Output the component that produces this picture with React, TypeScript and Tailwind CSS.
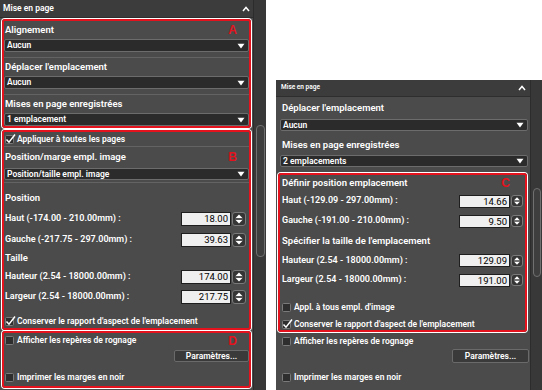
import React from "react";

const RED = "border-2 border-[#e3121c] rounded-[3px] shadow-[0_0_0_1px_#ffffff]";

function Caret() {
  return (
    <svg width="8" height="6" viewBox="0 0 8 6">
      <path d="M1 5 L4 1.5 L7 5" stroke="#fff" strokeWidth="1.5" fill="none" />
    </svg>
  );
}

function Arrow() {
  return (
    <svg width="8" height="6" viewBox="0 0 8 6">
      <path d="M0.5 0.8 H7.5 L4 5.5 Z" fill="#fff" />
    </svg>
  );
}

function Dropdown({ text, className = "" }: { text: string; className?: string }) {
  return (
    <div
      className={
        "flex items-center justify-between rounded-[2px] border border-[#6c6c6c] bg-[#2b2b2b] pl-[2px] pr-[3px] " +
        className
      }
    >
      <span className="text-[8.5px] font-semibold leading-none text-white">{text}</span>
      <Arrow />
    </div>
  );
}

function Check({ checked }: { checked?: boolean }) {
  return (
    <div className="relative h-[9px] w-[9px] shrink-0 rounded-[1.5px] border border-[#7a7a7a] bg-[#2e2e2e]">
      {checked && (
        <svg className="absolute -left-[1px] -top-[3px]" width="11" height="11" viewBox="0 0 11 11">
          <path d="M1.5 6.5 L4 9.2 L10 1.5" stroke="#fff" strokeWidth="1.5" fill="none" />
        </svg>
      )}
    </div>
  );
}

function Spinner({ className }: { className: string }) {
  return (
    <div className={"flex items-center justify-center rounded-[3px] border border-[#7a7a7a] bg-[#353535] " + className}>
      <svg viewBox="0 0 10 12" className="h-full w-full">
        <path d="M5 1.6 L8.4 5 H1.6 Z" fill="#fff" />
        <path d="M1.6 7 H8.4 L5 10.4 Z" fill="#fff" />
        <line x1="1" y1="6" x2="9" y2="6" stroke="#9a9a9a" strokeWidth="0.6" />
      </svg>
    </div>
  );
}

function NumField({ value, big }: { value: string; big?: boolean }) {
  return (
    <div className="flex items-center gap-[1px]">
      <div
        className={
          big
            ? "h-[14px] w-[50px] border border-[#1e1e1e] bg-[#efefef] pr-[2px] text-right text-[9.5px] leading-[12px] text-black"
            : "h-[13px] w-[51px] border border-[#1e1e1e] bg-[#efefef] pr-[2px] text-right text-[9.5px] leading-[11px] text-black"
        }
      >
        {value}
      </div>
      <Spinner className={big ? "h-[14px] w-[14px]" : "h-[12px] w-[12px]"} />
    </div>
  );
}

function FieldRow({ label, value, className, big }: { label: string; value: string; className: string; big?: boolean }) {
  return (
    <div className={"flex items-center justify-between " + className}>
      <span className="text-[9px] font-semibold text-white">{label}</span>
      <NumField value={value} big={big} />
    </div>
  );
}

function CheckRow({ label, checked, className }: { label: string; checked?: boolean; className: string }) {
  return (
    <div className={"flex items-center gap-[3px] " + className}>
      <Check checked={checked} />
      <span className="text-[8.5px] font-semibold leading-none text-white">{label}</span>
    </div>
  );
}

function Letter({ l }: { l: string }) {
  return <span className="font-['Liberation_Sans',sans-serif] text-[12px] font-bold leading-none text-[#e3121c]">{l}</span>;
}

function Label({ children }: { children: React.ReactNode }) {
  return <span className="text-[9.5px] font-semibold text-white">{children}</span>;
}

function LeftPanel() {
  return (
    <div className="flex h-[390px] w-[266px] shrink-0 bg-[#4b4b4b]">
      <div className="flex w-[253px] flex-col">
        <div className="flex h-[18px] shrink-0 items-center justify-between border-b border-[#2e2e2e] bg-[#3c3c3c] pl-[3px] pr-[3px]">
          <span className="text-[8.5px] font-semibold text-white">Mise en page</span>
          <Caret />
        </div>
        <div className="flex flex-col px-[2px] pt-[1px]">
          {/* A */}
          <div className={"flex h-[109px] flex-col " + RED}>
            <div className="flex flex-col border-b border-[#636363] pb-[5px]">
              <div className="flex h-[18px] items-center justify-between pl-[1px] pr-[12px]">
                <Label>Alignement</Label>
                <Letter l="A" />
              </div>
              <Dropdown text="Aucun" className="h-[13px]" />
            </div>
            <div className="flex flex-col border-b border-[#636363] pb-[5px]">
              <div className="flex h-[18px] items-center pl-[1px]">
                <Label>Déplacer l'emplacement</Label>
              </div>
              <Dropdown text="Aucun" className="h-[13px]" />
            </div>
            <div className="flex flex-col">
              <div className="flex h-[18px] items-center pl-[1px]">
                <Label>Mises en page enregistrées</Label>
              </div>
              <Dropdown text="1 emplacement" className="h-[13px]" />
            </div>
          </div>

          {/* B */}
          <div className={"mt-[2px] flex h-[200px] flex-col " + RED}>
            <CheckRow label="Appliquer à toutes les pages" checked className="h-[14px] pl-[1px]" />
            <div className="flex flex-col border-t border-[#636363] pb-[2px]">
              <div className="flex h-[20px] items-center justify-between pl-[1px] pr-[12px]">
                <Label>Position/marge empl. image</Label>
                <Letter l="B" />
              </div>
              <Dropdown text="Position/taille empl. image" className="mt-[1px] h-[12px]" />
            </div>
            <div className="flex flex-col border-t border-[#636363] pt-[6px] pl-[1px] pr-[3px]">
              <div className="flex h-[19px] items-center">
                <Label>Position</Label>
              </div>
              <FieldRow label="Haut (-174.00 - 210.00mm) :" value="18.00" className="h-[21px]" big />
              <FieldRow label="Gauche (-217.75 - 297.00mm) :" value="39.63" className="h-[21px]" big />
              <div className="flex h-[16px] items-center">
                <Label>Taille</Label>
              </div>
              <FieldRow label="Hauteur (2.54 - 18000.00mm) :" value="174.00" className="h-[21px]" big />
              <FieldRow label="Largeur (2.54 - 18000.00mm) :" value="217.75" className="h-[20px]" big />
              <CheckRow label="Conserver le rapport d'aspect de l'emplacement" checked className="mt-[8px] h-[13px]" />
            </div>
          </div>

          {/* D */}
          <div className={"mt-[1px] flex h-[57px] flex-col " + RED}>
            <div className="flex h-[15px] items-center justify-between pr-[12px]">
              <CheckRow label="Afficher les repères de rognage" className="h-[15px] pl-[1px]" />
              <Letter l="D" />
            </div>
            <div className="mt-[2px] flex justify-end">
              <div className="flex h-[12px] w-[75px] items-center justify-center rounded-[2px] border border-[#6a6a6a] bg-[#3a3a3a] text-[8.5px] font-semibold leading-none text-white">
                Paramètres...
              </div>
            </div>
            <CheckRow label="Imprimer les marges en noir" className="mt-[8px] h-[14px] pl-[1px]" />
          </div>
        </div>
      </div>
      <div className="flex w-[13px] flex-col border-l border-[#2c2c2c] bg-[#383838] pt-[125px]">
        <div className="mx-auto h-[132px] w-[9px] rounded-[4px] border border-[#707070] bg-[#3e3e3e]" />
      </div>
    </div>
  );
}

function RightPanel() {
  return (
    <div className="mt-[80px] flex h-[310px] w-[266px] shrink-0 bg-[#4b4b4b]">
      <div className="flex w-[254px] flex-col">
        <div className="flex h-[17px] shrink-0 items-center justify-between border-b border-[#2e2e2e] bg-[#3c3c3c] pl-[5px] pr-[4px]">
          <span className="text-[6.5px] font-semibold text-white">Mise en page</span>
          <Caret />
        </div>
        <div className="flex flex-col pt-[1px]">
          <div className="flex h-[21px] items-center pl-[6px]">
            <Label>Déplacer l'emplacement</Label>
          </div>
          <Dropdown text="Aucun" className="ml-[4px] mr-[2px] h-[12px]" />
          <div className="flex h-[24px] items-center pl-[6px] pt-[4px]">
            <Label>Mises en page enregistrées</Label>
          </div>
          <Dropdown text="2 emplacements" className="ml-[4px] mr-[2px] h-[12px]" />

          {/* C */}
          <div className={"ml-[2px] mr-[3px] mt-[6px] flex h-[159px] flex-col pl-[2px] pr-[2px] " + RED}>
            <div className="flex h-[16px] items-center justify-between pr-[13px]">
              <Label>Définir position emplacement</Label>
              <Letter l="C" />
            </div>
            <FieldRow label="Haut (-129.09 - 297.00mm) :" value="14.66" className="h-[20px]" />
            <FieldRow label="Gauche (-191.00 - 210.00mm) :" value="9.50" className="h-[20px]" />
            <div className="flex h-[20px] items-center">
              <Label>Spécifier la taille de l'emplacement</Label>
            </div>
            <FieldRow label="Hauteur (2.54 - 18000.00mm) :" value="129.09" className="h-[19px]" />
            <FieldRow label="Largeur (2.54 - 18000.00mm) :" value="191.00" className="h-[20px]" />
            <CheckRow label="Appl. à tous empl. d'image" className="mt-[10px] h-[14px]" />
            <CheckRow label="Conserver le rapport d'aspect de l'emplacement" checked className="mt-[4px] h-[12px]" />
          </div>

          <CheckRow label="Afficher les repères de rognage" className="mt-[1px] h-[16px] pl-[6px]" />
          <div className="flex justify-end pr-[1px]">
            <div className="flex h-[14px] w-[77px] items-center justify-center rounded-[2px] border border-[#6a6a6a] bg-[#3a3a3a] text-[8.5px] font-semibold leading-none text-white">
              Paramètres...
            </div>
          </div>
          <CheckRow label="Imprimer les marges en noir" className="mt-[7px] h-[15px] pl-[6px]" />
        </div>
      </div>
      <div className="flex w-[12px] flex-col border-l border-[#2c2c2c] bg-[#383838] pt-[108px]">
        <div className="ml-[2px] h-[89px] w-[8px] rounded-[4px] border border-[#707070] bg-[#3e3e3e]" />
      </div>
    </div>
  );
}

export default function App() {
  return (
    <div className="flex h-[390px] w-[542px] gap-[10px] overflow-hidden bg-white font-['Roboto',sans-serif] antialiased">
      <LeftPanel />
      <RightPanel />
    </div>
  );
}
